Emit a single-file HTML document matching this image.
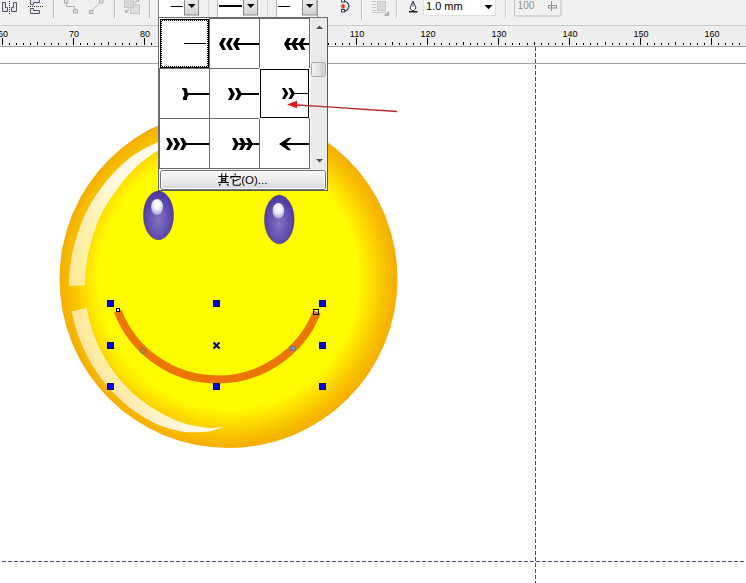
<!DOCTYPE html>
<html><head><meta charset="utf-8"><title>smiley</title><style>
html,body{margin:0;padding:0;width:746px;height:583px;overflow:hidden;background:#fff}
svg{position:absolute;left:0;top:0;font-family:"Liberation Sans",sans-serif}
</style></head><body>
<svg width="746" height="583" viewBox="0 0 746 583">
<rect x="0" y="0" width="746" height="583" fill="#ffffff"/>
<rect x="0" y="63" width="746" height="1" fill="#a4a4a4"/>
<line x1="535.5" y1="47" x2="535.5" y2="583" stroke="#4a4a6e" stroke-width="1" stroke-dasharray="4 2" stroke-dashoffset="0"/>
<line x1="0" y1="561.5" x2="746" y2="561.5" stroke="#4a4a6e" stroke-width="1" stroke-dasharray="4 2" stroke-dashoffset="4"/>
<defs>
<radialGradient id="face" cx="228.5" cy="279.0" r="169.0" gradientUnits="userSpaceOnUse">
<stop offset="0" stop-color="#fffc00"/>
<stop offset="0.765" stop-color="#fffc00"/>
<stop offset="0.80" stop-color="#fff000"/>
<stop offset="0.84" stop-color="#ffe100"/>
<stop offset="0.883" stop-color="#fcd100"/>
<stop offset="0.925" stop-color="#f8c200"/>
<stop offset="0.965" stop-color="#f6b700"/>
<stop offset="1" stop-color="#f4ad00"/>
</radialGradient>
<radialGradient id="eye" cx="0.5" cy="0.58" r="0.62" fx="0.5" fy="0.6">
<stop offset="0" stop-color="#8474c0"/>
<stop offset="0.5" stop-color="#6652b0"/>
<stop offset="1" stop-color="#4832a0"/>
</radialGradient>
<radialGradient id="eyehl" cx="0.5" cy="0.35" r="0.65">
<stop offset="0" stop-color="#ffffff"/>
<stop offset="0.45" stop-color="#f4f2fa"/>
<stop offset="1" stop-color="#a89ed0"/>
</radialGradient>
<linearGradient id="hl1" x1="0" y1="0" x2="0" y2="1">
<stop offset="0" stop-color="#ffffff" stop-opacity="0.97"/>
<stop offset="0.3" stop-color="#ffffff" stop-opacity="0.88"/>
<stop offset="0.6" stop-color="#ffffff" stop-opacity="0.68"/>
<stop offset="1" stop-color="#ffffff" stop-opacity="0.6"/>
</linearGradient>
<linearGradient id="hl2" x1="0" y1="0" x2="1" y2="1">
<stop offset="0" stop-color="#ffffff" stop-opacity="0.6"/>
<stop offset="0.55" stop-color="#ffffff" stop-opacity="0.68"/>
<stop offset="1" stop-color="#ffffff" stop-opacity="0.95"/>
</linearGradient>
<linearGradient id="btn" x1="0" y1="0" x2="0" y2="1">
<stop offset="0" stop-color="#f8f8f8"/>
<stop offset="0.5" stop-color="#ececec"/>
<stop offset="1" stop-color="#d6d6d6"/>
</linearGradient>
<linearGradient id="thumb" x1="0" y1="0" x2="1" y2="0">
<stop offset="0" stop-color="#f4f4f4"/>
<stop offset="0.5" stop-color="#e6e6e6"/>
<stop offset="0.8" stop-color="#cfcfcf"/>
<stop offset="1" stop-color="#e0e0e0"/>
</linearGradient>
<linearGradient id="ddbtn" x1="0" y1="0" x2="0" y2="1">
<stop offset="0" stop-color="#ececec"/>
<stop offset="1" stop-color="#d2d2d2"/>
</linearGradient>
</defs>
<circle cx="228.5" cy="279.0" r="169.0" fill="url(#face)"/>
<path d="M68.95 285.97 L69.02 281.17 L69.23 276.39 L69.59 271.63 L70.09 266.88 L70.73 262.16 L71.51 257.46 L72.43 252.80 L73.49 248.17 L74.68 243.58 L76.01 239.03 L77.37 234.50 L78.84 230.01 L80.44 225.57 L82.17 221.18 L84.04 216.84 L86.03 212.56 L88.15 208.35 L90.39 204.21 L92.76 200.14 L95.33 196.19 L98.02 192.33 L100.80 188.54 L103.61 184.78 L106.53 181.11 L109.56 177.52 L112.69 174.04 L115.92 170.64 L119.26 167.35 L122.69 164.16 L126.21 161.07 L129.82 158.09 L133.52 155.23 L137.44 152.65 L141.47 150.27 L145.56 148.02 L149.71 145.90 L153.91 143.91 L158.16 142.05 L162.45 140.33 L166.81 138.80 L171.22 137.44 L175.65 136.22 L180.10 135.13 L184.57 134.18 L189.05 133.37 L193.55 132.70 L198.04 132.17 L202.54 131.77 L202.54 131.77 L198.19 132.90 L193.89 134.15 L189.64 135.53 L185.44 137.03 L181.29 138.66 L177.20 140.41 L173.17 142.28 L169.21 144.26 L165.31 146.33 L161.45 148.46 L157.66 150.70 L153.94 153.05 L150.30 155.51 L146.74 158.07 L143.26 160.74 L139.87 163.50 L136.57 166.36 L133.43 169.40 L130.45 172.59 L127.58 175.85 L124.81 179.20 L122.16 182.61 L119.61 186.10 L117.13 189.61 L114.47 192.97 L111.91 196.41 L109.45 199.92 L107.10 203.51 L104.86 207.16 L102.83 210.94 L100.93 214.78 L99.14 218.68 L97.47 222.62 L95.93 226.61 L94.50 230.64 L93.20 234.71 L92.02 238.81 L90.92 242.94 L89.78 247.05 L88.76 251.20 L87.86 255.39 L87.09 259.60 L86.45 263.83 L85.93 268.09 L85.54 272.37 L85.27 276.66 L85.14 280.95 L85.14 285.26 Z" fill="url(#hl1)"/>
<path d="M71.77 311.17 L72.64 315.54 L73.63 319.89 L74.75 324.21 L75.99 328.51 L77.34 332.76 L78.82 336.98 L80.41 341.16 L82.12 345.30 L83.95 349.39 L85.88 353.43 L87.94 357.41 L90.10 361.34 L92.38 365.21 L94.76 369.01 L97.25 372.75 L99.84 376.42 L102.54 380.02 L105.34 383.54 L108.23 386.99 L111.22 390.36 L114.31 393.64 L117.49 396.84 L120.76 399.95 L124.11 402.96 L127.55 405.89 L131.10 408.69 L134.77 411.32 L138.50 413.86 L142.31 416.29 L146.18 418.61 L150.12 420.82 L154.11 422.92 L158.26 424.69 L162.51 426.24 L166.79 427.66 L171.09 428.95 L175.42 430.12 L179.77 431.17 L184.18 431.94 L188.70 432.17 L193.20 432.27 L197.67 432.23 L202.12 432.07 L206.53 431.78 L210.92 431.25 L215.32 429.86 L219.64 428.36 L223.86 426.73 L223.86 426.73 L219.70 427.28 L215.51 427.71 L211.29 428.02 L207.11 427.76 L202.95 427.23 L198.81 426.58 L194.68 425.81 L190.58 424.93 L186.50 423.93 L182.45 422.78 L178.52 421.28 L174.64 419.68 L170.81 417.97 L167.03 416.16 L163.30 414.24 L159.64 412.22 L156.04 410.11 L152.48 407.93 L148.99 405.65 L145.56 403.28 L142.21 400.82 L138.93 398.26 L135.72 395.62 L132.59 392.89 L129.55 390.07 L126.63 387.13 L123.80 384.11 L121.06 381.02 L118.40 377.86 L115.84 374.63 L113.38 371.33 L111.01 367.97 L108.73 364.55 L106.56 361.07 L104.49 357.54 L102.52 353.95 L100.64 350.33 L98.85 346.66 L97.16 342.95 L95.58 339.20 L94.11 335.41 L92.74 331.59 L91.48 327.73 L90.34 323.85 L89.30 319.94 L88.37 316.00 L87.56 312.05 L86.85 308.08 Z" fill="url(#hl2)"/>
<ellipse cx="158.5" cy="215.4" rx="15" ry="24.3" fill="url(#eye)" stroke="#3a2a7a" stroke-width="0.7" stroke-opacity="0.7"/>
<ellipse cx="157.1" cy="207" rx="6" ry="8" fill="url(#eyehl)"/>
<ellipse cx="279.3" cy="219.5" rx="14.8" ry="24.2" fill="url(#eye)" stroke="#3a2a7a" stroke-width="0.7" stroke-opacity="0.7"/>
<ellipse cx="278.4" cy="210.7" rx="5.9" ry="7.8" fill="url(#eyehl)"/>
<path d="M 117.71 311.11 A 107 107 0 0 0 316.95 311.98" fill="none" stroke="#ec7400" stroke-width="8"/>
<rect x="107.5" y="300.5" width="6" height="6" fill="#0000f0" stroke="#000070" stroke-width="1"/>
<rect x="107.5" y="342.5" width="6" height="6" fill="#0000f0" stroke="#000070" stroke-width="1"/>
<rect x="107.5" y="383.5" width="6" height="6" fill="#0000f0" stroke="#000070" stroke-width="1"/>
<rect x="213.5" y="300.5" width="6" height="6" fill="#0000f0" stroke="#000070" stroke-width="1"/>
<rect x="213.5" y="383.5" width="6" height="6" fill="#0000f0" stroke="#000070" stroke-width="1"/>
<rect x="319.5" y="300.5" width="6" height="6" fill="#0000f0" stroke="#000070" stroke-width="1"/>
<rect x="319.5" y="342.5" width="6" height="6" fill="#0000f0" stroke="#000070" stroke-width="1"/>
<rect x="319.5" y="383.5" width="6" height="6" fill="#0000f0" stroke="#000070" stroke-width="1"/>
<path d="M213.5 342.5 L219.5 348.5 M219.5 342.5 L213.5 348.5" stroke="#000080" stroke-width="2"/>
<rect x="116.5" y="308.5" width="3" height="3" fill="#ffffff" stroke="#000000" stroke-width="1"/>
<rect x="313.5" y="309.5" width="5" height="5" fill="none" stroke="#000000" stroke-width="1"/>
<circle cx="143" cy="351" r="2.5" fill="none" stroke="#6a7a8a" stroke-width="1"/>
<rect x="290.5" y="346.5" width="5" height="4" fill="#8a909a" stroke="#6a7a8a" stroke-width="1"/>
<rect x="0" y="0" width="746" height="25" fill="#f0f0f0"/>
<rect x="0" y="25" width="746" height="1" fill="#c8c8c8"/>
<rect x="0" y="26" width="746" height="20" fill="#eeeeee"/>
<rect x="0" y="46" width="746" height="1" fill="#a0a0a0"/>
<rect x="2" y="38" width="1" height="7" fill="#000"/>
<text x="3.0" y="37" font-size="9" text-anchor="middle" fill="#000">60</text>
<rect x="9" y="43" width="1" height="2" fill="#000"/>
<rect x="16" y="43" width="1" height="2" fill="#000"/>
<rect x="23" y="43" width="1" height="2" fill="#000"/>
<rect x="30" y="43" width="1" height="2" fill="#000"/>
<rect x="37" y="42" width="1" height="3" fill="#000"/>
<rect x="44" y="43" width="1" height="2" fill="#000"/>
<rect x="51" y="43" width="1" height="2" fill="#000"/>
<rect x="58" y="43" width="1" height="2" fill="#000"/>
<rect x="66" y="43" width="1" height="2" fill="#000"/>
<rect x="73" y="38" width="1" height="7" fill="#000"/>
<text x="74.0" y="37" font-size="9" text-anchor="middle" fill="#000">70</text>
<rect x="80" y="43" width="1" height="2" fill="#000"/>
<rect x="87" y="43" width="1" height="2" fill="#000"/>
<rect x="94" y="43" width="1" height="2" fill="#000"/>
<rect x="101" y="43" width="1" height="2" fill="#000"/>
<rect x="108" y="42" width="1" height="3" fill="#000"/>
<rect x="115" y="43" width="1" height="2" fill="#000"/>
<rect x="122" y="43" width="1" height="2" fill="#000"/>
<rect x="129" y="43" width="1" height="2" fill="#000"/>
<rect x="136" y="43" width="1" height="2" fill="#000"/>
<rect x="144" y="38" width="1" height="7" fill="#000"/>
<text x="145.0" y="37" font-size="9" text-anchor="middle" fill="#000">80</text>
<rect x="151" y="43" width="1" height="2" fill="#000"/>
<rect x="158" y="43" width="1" height="2" fill="#000"/>
<rect x="165" y="43" width="1" height="2" fill="#000"/>
<rect x="172" y="43" width="1" height="2" fill="#000"/>
<rect x="179" y="42" width="1" height="3" fill="#000"/>
<rect x="186" y="43" width="1" height="2" fill="#000"/>
<rect x="193" y="43" width="1" height="2" fill="#000"/>
<rect x="200" y="43" width="1" height="2" fill="#000"/>
<rect x="207" y="43" width="1" height="2" fill="#000"/>
<rect x="215" y="38" width="1" height="7" fill="#000"/>
<text x="216.0" y="37" font-size="9" text-anchor="middle" fill="#000">90</text>
<rect x="222" y="43" width="1" height="2" fill="#000"/>
<rect x="229" y="43" width="1" height="2" fill="#000"/>
<rect x="236" y="43" width="1" height="2" fill="#000"/>
<rect x="243" y="43" width="1" height="2" fill="#000"/>
<rect x="250" y="42" width="1" height="3" fill="#000"/>
<rect x="257" y="43" width="1" height="2" fill="#000"/>
<rect x="264" y="43" width="1" height="2" fill="#000"/>
<rect x="271" y="43" width="1" height="2" fill="#000"/>
<rect x="278" y="43" width="1" height="2" fill="#000"/>
<rect x="285" y="38" width="1" height="7" fill="#000"/>
<text x="286.0" y="37" font-size="9" text-anchor="middle" fill="#000">100</text>
<rect x="293" y="43" width="1" height="2" fill="#000"/>
<rect x="300" y="43" width="1" height="2" fill="#000"/>
<rect x="307" y="43" width="1" height="2" fill="#000"/>
<rect x="314" y="43" width="1" height="2" fill="#000"/>
<rect x="321" y="42" width="1" height="3" fill="#000"/>
<rect x="328" y="43" width="1" height="2" fill="#000"/>
<rect x="335" y="43" width="1" height="2" fill="#000"/>
<rect x="342" y="43" width="1" height="2" fill="#000"/>
<rect x="349" y="43" width="1" height="2" fill="#000"/>
<rect x="356" y="38" width="1" height="7" fill="#000"/>
<text x="357.0" y="37" font-size="9" text-anchor="middle" fill="#000">110</text>
<rect x="363" y="43" width="1" height="2" fill="#000"/>
<rect x="371" y="43" width="1" height="2" fill="#000"/>
<rect x="378" y="43" width="1" height="2" fill="#000"/>
<rect x="385" y="43" width="1" height="2" fill="#000"/>
<rect x="392" y="42" width="1" height="3" fill="#000"/>
<rect x="399" y="43" width="1" height="2" fill="#000"/>
<rect x="406" y="43" width="1" height="2" fill="#000"/>
<rect x="413" y="43" width="1" height="2" fill="#000"/>
<rect x="420" y="43" width="1" height="2" fill="#000"/>
<rect x="427" y="38" width="1" height="7" fill="#000"/>
<text x="428.0" y="37" font-size="9" text-anchor="middle" fill="#000">120</text>
<rect x="434" y="43" width="1" height="2" fill="#000"/>
<rect x="441" y="43" width="1" height="2" fill="#000"/>
<rect x="449" y="43" width="1" height="2" fill="#000"/>
<rect x="456" y="43" width="1" height="2" fill="#000"/>
<rect x="463" y="42" width="1" height="3" fill="#000"/>
<rect x="470" y="43" width="1" height="2" fill="#000"/>
<rect x="477" y="43" width="1" height="2" fill="#000"/>
<rect x="484" y="43" width="1" height="2" fill="#000"/>
<rect x="491" y="43" width="1" height="2" fill="#000"/>
<rect x="498" y="38" width="1" height="7" fill="#000"/>
<text x="499.0" y="37" font-size="9" text-anchor="middle" fill="#000">130</text>
<rect x="505" y="43" width="1" height="2" fill="#000"/>
<rect x="512" y="43" width="1" height="2" fill="#000"/>
<rect x="519" y="43" width="1" height="2" fill="#000"/>
<rect x="527" y="43" width="1" height="2" fill="#000"/>
<rect x="534" y="42" width="1" height="3" fill="#000"/>
<rect x="541" y="43" width="1" height="2" fill="#000"/>
<rect x="548" y="43" width="1" height="2" fill="#000"/>
<rect x="555" y="43" width="1" height="2" fill="#000"/>
<rect x="562" y="43" width="1" height="2" fill="#000"/>
<rect x="569" y="38" width="1" height="7" fill="#000"/>
<text x="570.0" y="37" font-size="9" text-anchor="middle" fill="#000">140</text>
<rect x="576" y="43" width="1" height="2" fill="#000"/>
<rect x="583" y="43" width="1" height="2" fill="#000"/>
<rect x="590" y="43" width="1" height="2" fill="#000"/>
<rect x="597" y="43" width="1" height="2" fill="#000"/>
<rect x="605" y="42" width="1" height="3" fill="#000"/>
<rect x="612" y="43" width="1" height="2" fill="#000"/>
<rect x="619" y="43" width="1" height="2" fill="#000"/>
<rect x="626" y="43" width="1" height="2" fill="#000"/>
<rect x="633" y="43" width="1" height="2" fill="#000"/>
<rect x="640" y="38" width="1" height="7" fill="#000"/>
<text x="641.0" y="37" font-size="9" text-anchor="middle" fill="#000">150</text>
<rect x="647" y="43" width="1" height="2" fill="#000"/>
<rect x="654" y="43" width="1" height="2" fill="#000"/>
<rect x="661" y="43" width="1" height="2" fill="#000"/>
<rect x="668" y="43" width="1" height="2" fill="#000"/>
<rect x="675" y="42" width="1" height="3" fill="#000"/>
<rect x="683" y="43" width="1" height="2" fill="#000"/>
<rect x="690" y="43" width="1" height="2" fill="#000"/>
<rect x="697" y="43" width="1" height="2" fill="#000"/>
<rect x="704" y="43" width="1" height="2" fill="#000"/>
<rect x="711" y="38" width="1" height="7" fill="#000"/>
<text x="712.0" y="37" font-size="9" text-anchor="middle" fill="#000">160</text>
<rect x="718" y="43" width="1" height="2" fill="#000"/>
<rect x="725" y="43" width="1" height="2" fill="#000"/>
<rect x="732" y="43" width="1" height="2" fill="#000"/>
<rect x="739" y="43" width="1" height="2" fill="#000"/>
<rect x="746" y="42" width="1" height="3" fill="#000"/>
<path d="M2.5 2.5 H5.5 V7.5 H7.5 V11.5 H2.5 Z" fill="#e4e2f0" stroke="#56565e" stroke-width="1"/>
<path d="M13.5 2.5 H16.5 V11.5 H11.5 V7.5 H13.5 Z" fill="#e4e2f0" stroke="#56565e" stroke-width="1"/>
<rect x="9" y="1" width="1" height="1" fill="#222"/>
<rect x="9" y="3" width="1" height="1" fill="#222"/>
<rect x="9" y="5" width="1" height="1" fill="#222"/>
<rect x="9" y="7" width="1" height="1" fill="#222"/>
<rect x="9" y="9" width="1" height="1" fill="#222"/>
<rect x="9" y="11" width="1" height="1" fill="#222"/>
<rect x="9" y="13" width="1" height="1" fill="#222"/>
<path d="M30.5 -0.5 H39.5 V2.5 H33.5 V4.5 H30.5 Z" fill="#e4e2f0" stroke="#56565e" stroke-width="1"/>
<path d="M30.5 8.5 H33.5 V10.5 H39.5 V13.5 H30.5 Z" fill="#e4e2f0" stroke="#56565e" stroke-width="1"/>
<rect x="28" y="6" width="1" height="1" fill="#222"/>
<rect x="30" y="6" width="1" height="1" fill="#222"/>
<rect x="32" y="6" width="1" height="1" fill="#222"/>
<rect x="34" y="6" width="1" height="1" fill="#222"/>
<rect x="36" y="6" width="1" height="1" fill="#222"/>
<rect x="38" y="6" width="1" height="1" fill="#222"/>
<rect x="40" y="6" width="1" height="1" fill="#222"/>
<rect x="42" y="6" width="1" height="1" fill="#222"/>
<rect x="53" y="0" width="1" height="18" fill="#b4b4b4"/><rect x="54" y="0" width="1" height="18" fill="#ffffff"/>
<rect x="114" y="0" width="1" height="18" fill="#b4b4b4"/><rect x="115" y="0" width="1" height="18" fill="#ffffff"/>
<rect x="149" y="0" width="1" height="18" fill="#b4b4b4"/><rect x="150" y="0" width="1" height="18" fill="#ffffff"/>
<rect x="64.5" y="-0.5" width="3.5" height="3.5" fill="#dcdcdc" stroke="#b0b0b0"/>
<path d="M66.5 3 V6.5 H74.5 V9" fill="none" stroke="#b0b0b0"/>
<rect x="73.5" y="9.5" width="4" height="3.5" fill="#dcdcdc" stroke="#b0b0b0"/>
<rect x="89.5" y="10.5" width="3.5" height="3" fill="#dcdcdc" stroke="#b0b0b0"/>
<path d="M92 10.5 L99.5 3" fill="none" stroke="#b0b0b0"/>
<rect x="99.5" y="-0.5" width="3.5" height="3.5" fill="#dcdcdc" stroke="#b0b0b0"/>
<rect x="130.5" y="4.5" width="9" height="9" fill="#dcdcdc" stroke="#c4c4c4"/>
<rect x="124.5" y="-0.5" width="9" height="8" fill="#d8d8d8" stroke="#c4c4c4"/>
<path d="M125.5 12.5 L129 9 M125.5 12.5 H128 M125.5 12.5 V10" stroke="#b4b4b4" stroke-width="1.2" fill="none"/>
<path d="M134.8 3 L138.5 -0.5 M138.5 -0.5 V2 M138.5 -0.5 H136" stroke="#b4b4b4" stroke-width="1.2" fill="none"/>
<rect x="158" y="0" width="41" height="17" fill="#ffffff"/>
<rect x="158" y="0" width="1" height="17" fill="#8c8c8c"/>
<rect x="171" y="6" width="12" height="1" fill="#000"/>
<rect x="184.5" y="-1" width="14" height="16" fill="url(#ddbtn)" stroke="#8a8a8a"/>
<path d="M188 4 H195.5 L191.75 8 Z" fill="#000"/>
<rect x="208" y="0" width="1" height="17" fill="#d8d8d8"/>
<rect x="217" y="0" width="41" height="17" fill="#ffffff"/>
<rect x="217" y="0" width="1" height="17" fill="#b8b8b8"/>
<rect x="219" y="5" width="23" height="2" fill="#000"/>
<rect x="243.5" y="-1" width="14" height="16" fill="url(#ddbtn)" stroke="#8a8a8a"/>
<path d="M247 4 H254.5 L250.75 8 Z" fill="#000"/>
<rect x="267" y="0" width="1" height="17" fill="#d8d8d8"/>
<rect x="276" y="0" width="42" height="17" fill="#ffffff"/>
<rect x="276" y="0" width="1" height="17" fill="#b8b8b8"/>
<rect x="278" y="6" width="12" height="1" fill="#000"/>
<rect x="302.5" y="-1" width="14.5" height="16" fill="url(#ddbtn)" stroke="#8a8a8a"/>
<path d="M306 4 H313.5 L309.75 8 Z" fill="#000"/>
<rect x="317" y="0" width="1" height="17" fill="#9a9a9a"/>
<path d="M343.8 1.2 A5 5 0 0 1 343.8 11.2" fill="none" stroke="#3a3a58" stroke-width="1.3"/>
<rect x="341.5" y="-0.5" width="3" height="2.5" fill="#fff" stroke="#3a3a58" stroke-width="1"/>
<rect x="341.5" y="9.5" width="3" height="2.5" fill="#fff" stroke="#3a3a58" stroke-width="1"/>
<path d="M343 3.8 L346 6.6 H344.4 V8.6 H341.6 V6.6 H340 Z" fill="#e04010"/>
<rect x="361" y="0" width="1" height="20" fill="#c4c4c4"/><rect x="362" y="0" width="1" height="20" fill="#fff"/>
<rect x="372" y="1" width="4" height="1" fill="#c8c8c8"/>
<rect x="372" y="4" width="4" height="1" fill="#c8c8c8"/>
<rect x="372" y="7" width="4" height="1" fill="#c8c8c8"/>
<rect x="372" y="10" width="4" height="1" fill="#c8c8c8"/>
<rect x="372" y="12" width="14" height="1" fill="#c8c8c8"/>
<rect x="377.5" y="1.5" width="8" height="9" fill="#d6d6d6" stroke="#c8c8c8"/>
<path d="M383.5 15.7 L389.2 15.7 L389.2 11 Z" fill="#a8a8a8"/>
<rect x="396" y="0" width="1" height="18" fill="#c4c4c4"/><rect x="397" y="0" width="1" height="18" fill="#fff"/>
<path d="M413 1 L410 8 L412 10.5 H414 L416 8 Z" fill="#fff" stroke="#34344a" stroke-width="1"/>
<path d="M413 3 V7" stroke="#34344a" stroke-width="0.8"/>
<rect x="409" y="11" width="8.5" height="1.5" fill="#1e1e2a"/>
<rect x="423.5" y="-1" width="72" height="16.5" fill="#fff" stroke="#e0e0e0"/>
<text x="426" y="10.2" font-size="11" fill="#000">1.0 mm</text>
<path d="M484.5 5 H492.5 L488.5 9.2 Z" fill="#000"/>
<rect x="505" y="0" width="1" height="18" fill="#c8c8c8"/><rect x="506" y="0" width="1" height="18" fill="#fff"/>
<rect x="514.5" y="-1" width="46.5" height="17" fill="#f0f0f0" stroke="#c0c0c0" rx="1"/>
<text x="517.6" y="9" font-size="10" fill="#909090">100</text>
<rect x="548.5" y="5.5" width="8" height="2.5" fill="none" stroke="#909090" stroke-width="1"/><rect x="551" y="1" width="1" height="10" fill="#909090"/>
<rect x="158" y="17" width="170" height="174" fill="#f4f4f4"/>
<rect x="159" y="18" width="150" height="150" fill="#ffffff"/>
<rect x="158" y="17" width="170" height="1" fill="#6c6c6c"/>
<rect x="158" y="17" width="1" height="174" fill="#6c6c6c"/>
<rect x="327" y="17" width="1" height="174" fill="#5c5c5c"/>
<rect x="158" y="190" width="170" height="1" fill="#5c5c5c"/>
<rect x="159" y="18" width="1" height="151" fill="#6a6a6a"/>
<rect x="209" y="18" width="1" height="151" fill="#6a6a6a"/>
<rect x="259" y="18" width="1" height="151" fill="#6a6a6a"/>
<rect x="309" y="18" width="1" height="151" fill="#6a6a6a"/>
<rect x="159" y="18" width="151" height="1" fill="#6a6a6a"/>
<rect x="159" y="68" width="151" height="1" fill="#6a6a6a"/>
<rect x="159" y="118" width="151" height="1" fill="#6a6a6a"/>
<rect x="159" y="168" width="151" height="1" fill="#6a6a6a"/>
<rect x="310" y="18" width="17" height="151" fill="#eaeaea"/>
<rect x="310" y="18" width="1" height="151" fill="#f8f8f8"/>
<path d="M316 29 L319.5 25.5 L323 29 Z" fill="#505050"/>
<path d="M316 159 L319.5 162.5 L323 159 Z" fill="#505050"/>
<rect x="311.5" y="62.5" width="14" height="14" rx="2" fill="url(#thumb)" stroke="#a8a8a8"/>
<rect x="159" y="18" width="50" height="1" fill="#ffffff"/><rect x="159" y="18" width="1" height="50" fill="#ffffff"/>
<rect x="160.5" y="19.5" width="48" height="48" fill="none" stroke="#000" stroke-width="1"/>
<path d="M161 21h1v1h-1zM161 23h1v1h-1zM161 25h1v1h-1zM161 27h1v1h-1zM161 29h1v1h-1zM161 31h1v1h-1zM161 33h1v1h-1zM161 35h1v1h-1zM161 37h1v1h-1zM161 39h1v1h-1zM161 41h1v1h-1zM161 43h1v1h-1zM161 45h1v1h-1zM161 47h1v1h-1zM161 49h1v1h-1zM161 51h1v1h-1zM161 53h1v1h-1zM161 55h1v1h-1zM161 57h1v1h-1zM161 59h1v1h-1zM161 61h1v1h-1zM161 63h1v1h-1zM161 65h1v1h-1zM162 20h1v1h-1zM162 66h1v1h-1zM164 20h1v1h-1zM164 66h1v1h-1zM166 20h1v1h-1zM166 66h1v1h-1zM168 20h1v1h-1zM168 66h1v1h-1zM170 20h1v1h-1zM170 66h1v1h-1zM172 20h1v1h-1zM172 66h1v1h-1zM174 20h1v1h-1zM174 66h1v1h-1zM176 20h1v1h-1zM176 66h1v1h-1zM178 20h1v1h-1zM178 66h1v1h-1zM180 20h1v1h-1zM180 66h1v1h-1zM182 20h1v1h-1zM182 66h1v1h-1zM184 20h1v1h-1zM184 66h1v1h-1zM186 20h1v1h-1zM186 66h1v1h-1zM188 20h1v1h-1zM188 66h1v1h-1zM190 20h1v1h-1zM190 66h1v1h-1zM192 20h1v1h-1zM192 66h1v1h-1zM194 20h1v1h-1zM194 66h1v1h-1zM196 20h1v1h-1zM196 66h1v1h-1zM198 20h1v1h-1zM198 66h1v1h-1zM200 20h1v1h-1zM200 66h1v1h-1zM202 20h1v1h-1zM202 66h1v1h-1zM204 20h1v1h-1zM204 66h1v1h-1zM206 20h1v1h-1zM206 66h1v1h-1zM207 21h1v1h-1zM207 23h1v1h-1zM207 25h1v1h-1zM207 27h1v1h-1zM207 29h1v1h-1zM207 31h1v1h-1zM207 33h1v1h-1zM207 35h1v1h-1zM207 37h1v1h-1zM207 39h1v1h-1zM207 41h1v1h-1zM207 43h1v1h-1zM207 45h1v1h-1zM207 47h1v1h-1zM207 49h1v1h-1zM207 51h1v1h-1zM207 53h1v1h-1zM207 55h1v1h-1zM207 57h1v1h-1zM207 59h1v1h-1zM207 61h1v1h-1zM207 63h1v1h-1zM207 65h1v1h-1z" fill="#000"/>
<rect x="184" y="43" width="22" height="1" fill="#000"/>
<rect x="259" y="68" width="51" height="51" fill="#ffffff"/>
<rect x="260.5" y="69.5" width="48" height="48" fill="none" stroke="#000" stroke-width="1"/>
<rect x="309" y="118" width="1" height="51" fill="#6a6a6a"/>
<path d="M219 44 L222.5 38.0 H226.0 L223 44 L226.0 50.0 H222.5 Z" fill="#000"/>
<path d="M226 44 L229.5 38.0 H233.0 L230 44 L233.0 50.0 H229.5 Z" fill="#000"/>
<path d="M233 44 L236.5 38.0 H240.0 L237 44 L240.0 50.0 H236.5 Z" fill="#000"/>
<rect x="237" y="43" width="22" height="2" fill="#000"/>
<path d="M284.0 44 L287.5 38.0 H291.0 L288.0 44 L291.0 50.0 H287.5 Z" fill="#000"/>
<path d="M291.2 44 L294.7 38.0 H298.2 L295.2 44 L298.2 50.0 H294.7 Z" fill="#000"/>
<path d="M298.4 44 L301.9 38.0 H305.4 L302.4 44 L305.4 50.0 H301.9 Z" fill="#000"/>
<rect x="286" y="43" width="23" height="2" fill="#000"/>
<path d="M182 88 H186 L187.2 89.5 V92 L188.3 93 V96.2 L187 97.2 V100 H183 V97.2 L184.2 96 V92 L183 89.5 H182 Z" fill="#000"/>
<rect x="188" y="93" width="21" height="2" fill="#000"/>
<path d="M235 94 L231.5 88.0 H228.0 L231 94 L228.0 100.0 H231.5 Z" fill="#000"/>
<path d="M242 94 L238.5 88.0 H235.0 L238 94 L235.0 100.0 H238.5 Z" fill="#000"/>
<rect x="241" y="93" width="18" height="2" fill="#000"/>
<path d="M288.5 93.5 L285.0 88.0 H281.9 L284.9 93.5 L281.9 99.0 H285.0 Z" fill="#000"/>
<path d="M295.0 93.5 L291.5 88.0 H288.4 L291.4 93.5 L288.4 99.0 H291.5 Z" fill="#000"/>
<rect x="294" y="93" width="14" height="1" fill="#000"/>
<path d="M173 144 L169.5 138.0 H166.0 L169 144 L166.0 150.0 H169.5 Z" fill="#000"/>
<path d="M180 144 L176.5 138.0 H173.0 L176 144 L173.0 150.0 H176.5 Z" fill="#000"/>
<path d="M187 144 L183.5 138.0 H180.0 L183 144 L180.0 150.0 H183.5 Z" fill="#000"/>
<rect x="186" y="143" width="23" height="2" fill="#000"/>
<path d="M239 144 L235.5 138.0 H232.0 L235 144 L232.0 150.0 H235.5 Z" fill="#000"/>
<path d="M246 144 L242.5 138.0 H239.0 L242 144 L239.0 150.0 H242.5 Z" fill="#000"/>
<path d="M253 144 L249.5 138.0 H246.0 L249 144 L246.0 150.0 H249.5 Z" fill="#000"/>
<rect x="236" y="143" width="23" height="2" fill="#000"/>
<path d="M279 144 L288.5 137.8 H291.5 L285.5 144 L291 150.2 H288 Z" fill="#000"/>
<rect x="284" y="143" width="25" height="2" fill="#000"/>
<rect x="160.5" y="170.5" width="165" height="19" rx="2.5" fill="url(#btn)" stroke="#707070"/>
<rect x="161.5" y="171.5" width="163" height="17" rx="1.5" fill="none" stroke="#fbfbfb" stroke-width="1"/>
<g fill="none" stroke="#000" stroke-width="1.1" stroke-linecap="butt"><path d="M218.4 176.5 H228.6 M221.7 173.6 V182.5 M225.7 173.6 V182.5 M221.7 178.6 H225.7 M221.7 180.6 H225.7 M218.2 182.5 H229 M220.5 184 L219 185.6 M227 184 L228.6 185.6"/><path d="M234.9 173.5 L235.5 175.3 M230.8 178.6 V176.6 H240.2 V178.4 M233 181.2 L239.4 179.3 M233.2 178.8 V184 Q233.2 185.2 234.6 185.2 H239.4 Q240.3 185.2 240.4 183.4"/></g>
<text x="241.2" y="184.3" font-size="11.5" fill="#000">(O)...</text>
<path d="M297 105 L320 106.3 L397 111.5" fill="none" stroke="#b8282a" stroke-width="1.3"/>
<path d="M287 104.4 L297 100.8 L297 108.3 Z" fill="#e81010"/>
</svg>
</body></html>
